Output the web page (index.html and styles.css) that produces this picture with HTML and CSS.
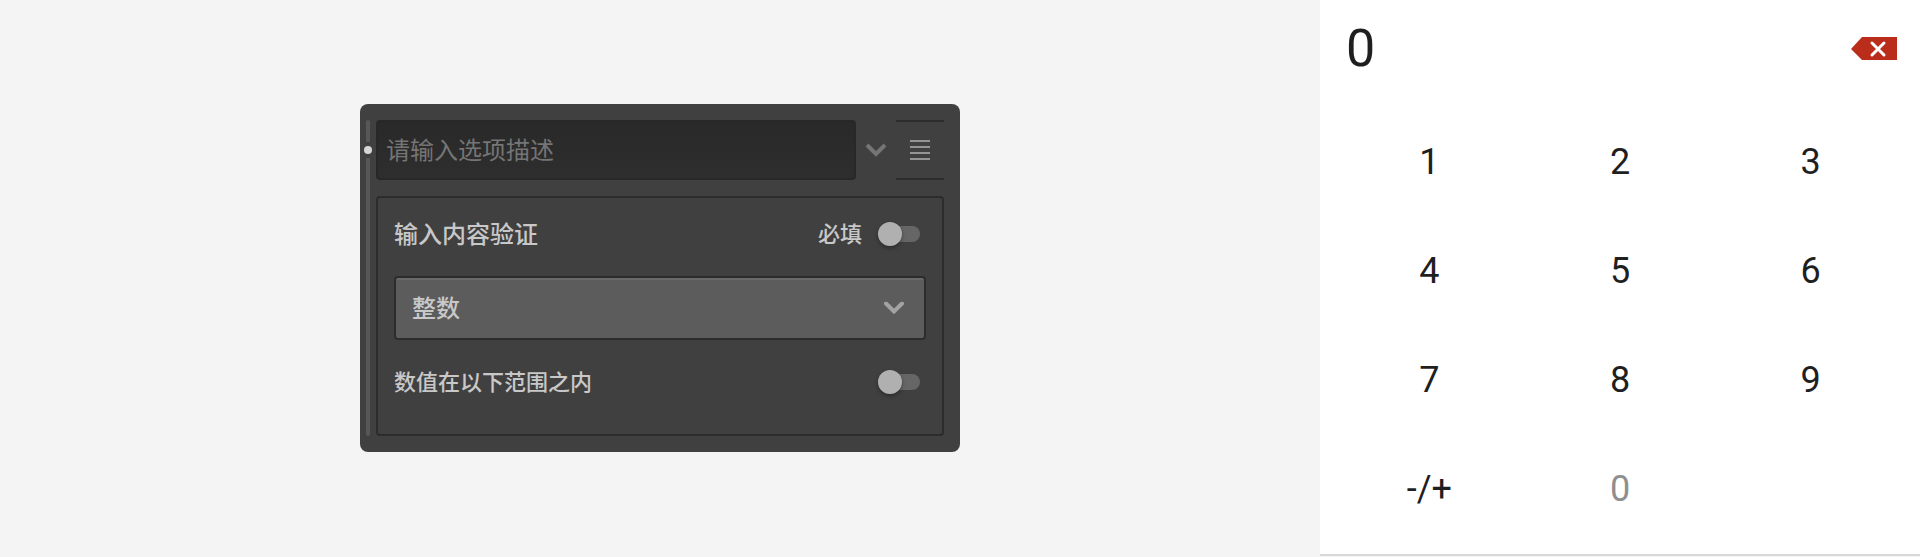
FILE: index.html
```html
<!DOCTYPE html>
<html lang="zh-CN">
<head>
<meta charset="utf-8">
<meta name="viewport" content="width=device-width, initial-scale=1">
<title>选项设置</title>
<link rel="stylesheet" href="styles.css">
</head>
<body>
<div class="layout">
  <main class="stage">
    <form class="card">
      <div class="rail" aria-hidden="true">
        <span class="rail-top"></span>
        <span class="rail-dot"></span>
        <span class="rail-rest"></span>
      </div>
      <div class="card-body">
        <div class="option-bar">
          <input class="option-input" type="text" placeholder="请输入选项描述" aria-label="选项描述">
          <button class="expand-button" type="button" aria-label="展开">
            <svg width="22" height="14" viewBox="0 0 22 14"><path d="M2 2l9 9 9-9" fill="none" stroke="#757575" stroke-width="4"/></svg>
          </button>
          <button class="menu-button" type="button" aria-label="菜单">
            <svg width="20" height="20" viewBox="0 0 20 20"><path d="M0 1h20M0 7h20M0 13h20M0 19h20" fill="none" stroke="#959595" stroke-width="2"/></svg>
          </button>
        </div>
        <section class="panel">
          <div class="row">
            <h2 class="title">输入内容验证</h2>
            <label class="label" for="required">必填</label>
            <input class="switch" type="checkbox" role="switch" id="required">
          </div>
          <div class="select-box">
            <select class="select" aria-label="验证类型">
              <option>整数</option>
            </select>
            <svg class="select-arrow" width="20" height="13" viewBox="0 0 20 13" aria-hidden="true"><path d="M2 2l8 8 8-8" fill="none" stroke="#a3a3a3" stroke-width="4" stroke-linecap="round" stroke-linejoin="miter"/></svg>
          </div>
          <div class="row">
            <label class="label label-wide" for="range">数值在以下范围之内</label>
            <input class="switch" type="checkbox" role="switch" id="range">
          </div>
        </section>
      </div>
    </form>
  </main>
  <aside class="keypad">
    <div class="display">
      <output class="value">0</output>
      <button class="erase" type="button" aria-label="删除">
        <svg width="48" height="24" viewBox="0 0 48 24"><path d="M1 12L12 0h35v23H12z" fill="#b92d1a"/><path d="M22 6l12 12M34 6L22 18" fill="none" stroke="#fff" stroke-width="3" stroke-linecap="round"/></svg>
      </button>
    </div>
    <div class="keys">
      <button class="key" type="button">1</button>
      <button class="key" type="button">2</button>
      <button class="key" type="button">3</button>
      <button class="key" type="button">4</button>
      <button class="key" type="button">5</button>
      <button class="key" type="button">6</button>
      <button class="key" type="button">7</button>
      <button class="key" type="button">8</button>
      <button class="key" type="button">9</button>
      <button class="key" type="button">-/+</button>
      <button class="key key-muted" type="button">0</button>
    </div>
  </aside>
</div>
</body>
</html>
```

FILE: styles.css
```css
* {
  box-sizing: border-box;
}

body {
  margin: 0;
  background: #f4f4f4;
  font-family: "Noto Sans CJK SC", sans-serif;
}

button {
  padding: 0;
  border: 0;
  background: none;
}

svg {
  display: block;
}

.layout {
  display: grid;
  grid-template-columns: 11fr 5fr;
  min-height: 100vh;
  padding-bottom: 1px;
}

.stage {
  display: flex;
  align-items: center;
  justify-content: center;
}

.card {
  display: flex;
  width: 100%;
  max-width: 600px;
  padding: 16px 16px 16px 0;
  border-radius: 8px;
  background: #404040;
}

.rail {
  display: flex;
  flex-direction: column;
  align-items: center;
  gap: 4px;
  width: 16px;
}

.rail-top,
.rail-rest {
  width: 4px;
  background: #575757;
}

.rail-top {
  height: 22px;
  border-radius: 2px 2px 0 0;
}

.rail-dot {
  width: 8px;
  height: 8px;
  border-radius: 50%;
  background: #d6d6d6;
}

.rail-rest {
  flex: 1;
  border-radius: 0 0 2px 2px;
}

.card-body {
  display: flex;
  flex: 1;
  flex-direction: column;
  gap: 16px;
  min-width: 0;
}

.option-bar {
  display: flex;
  height: 60px;
}

.option-input {
  flex: 1;
  min-width: 0;
  padding: 0 8px 4px;
  border: 2px solid #282828;
  border-radius: 4px;
  background: linear-gradient(#292929, #2e2e2e);
  color: #d6d6d6;
  font: 400 24px "Noto Sans CJK SC", sans-serif;
}

.option-input::placeholder {
  color: #757575;
}

.expand-button,
.menu-button {
  display: flex;
  align-items: center;
  justify-content: center;
}

.expand-button {
  width: 40px;
}

.menu-button {
  width: 48px;
  border-top: 2px solid #2c2c2c;
  border-bottom: 2px solid #2c2c2c;
}

.panel {
  display: flex;
  flex-direction: column;
  gap: 18px;
  padding: 12px 16px 28px;
  border: 2px solid #2c2c2c;
  border-radius: 4px;
}

.row {
  display: flex;
  align-items: center;
  height: 48px;
  padding-right: 6px;
  color: #c8c8c8;
}

.title {
  flex: 1;
  margin: 0;
  padding-bottom: 4px;
  font-size: 24px;
  font-weight: 500;
}

.label {
  margin-right: 16px;
  padding-bottom: 4px;
  font-size: 22px;
  font-weight: 500;
}

.label-wide {
  flex: 1;
}

.select-box {
  position: relative;
}

.select {
  display: block;
  width: 100%;
  height: 64px;
  padding: 0 16px 4px;
  border: 2px solid #2c2c2c;
  border-radius: 4px;
  appearance: none;
  background: #5c5c5c;
  box-shadow: inset 0 2px #696969;
  color: #c8c8c8;
  font: 500 24px "Noto Sans CJK SC", sans-serif;
}

.select-arrow {
  position: absolute;
  top: 50%;
  right: 22px;
  transform: translateY(-50%);
  pointer-events: none;
}

.switch {
  display: flex;
  align-items: center;
  width: 42px;
  height: 16px;
  margin: 0;
  border-radius: 8px;
  appearance: none;
  background: #666;
}

.switch::before {
  width: 24px;
  height: 24px;
  border-radius: 50%;
  background: #b0b0b0;
  box-shadow: 0 2px 4px rgba(0, 0, 0, 0.35);
  content: "";
}

.switch:checked {
  justify-content: flex-end;
}

.keypad {
  display: flex;
  flex-direction: column;
  padding-bottom: 11px;
  border-bottom: 2px solid #d8d8d8;
  background: #fff;
  color: #1f1f1f;
  font-family: Roboto, sans-serif;
}

.display {
  display: flex;
  align-items: center;
  justify-content: space-between;
  height: 98px;
  margin-bottom: 9px;
  padding: 0 22px 0 26px;
}

.value {
  font-size: 52px;
  line-height: 64px;
}

.keys {
  display: grid;
  flex: 1;
  grid-template-columns: repeat(3, 1fr);
  grid-auto-rows: 1fr;
  padding: 0 14px;
}

.key {
  min-height: 64px;
  color: inherit;
  font: 36px Roboto, sans-serif;
}

.key-muted {
  color: #8f8f8f;
}
```
